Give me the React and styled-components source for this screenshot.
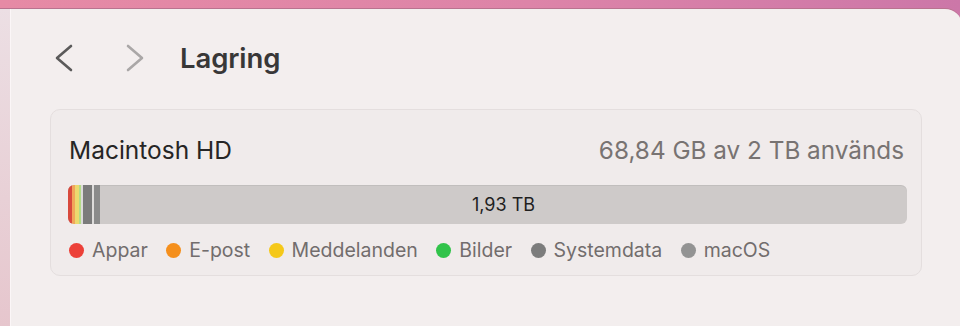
import React from "react";
import styled, { createGlobalStyle } from "styled-components";

const GlobalStyle = createGlobalStyle`
  html, body {
    margin: 0;
    padding: 0;
    width: 960px;
    height: 326px;
    overflow: hidden;
    font-family: Inter, "Noto Sans", "Liberation Sans", sans-serif;
  }
`;

const Desktop = styled.div`
  width: 960px;
  height: 326px;
  background: linear-gradient(90deg, #e68aa5 0%, #dd84a8 55%, #cc77a8 100%);
  display: flex;
  flex-direction: column;
  overflow: hidden;
`;

const Window = styled.div`
  flex: 1;
  margin-top: 8px;
  margin-right: -2px;
  display: flex;
  border-top: 1px solid #b9738f;
  border-top-right-radius: 17px;
  overflow: hidden;
`;

const Sidebar = styled.div`
  width: 10px;
  background: linear-gradient(180deg, #ecdfe4 0%, #e8d0d6 60%, #e6c6cd 100%);
  border-right: 1px solid #fbf6f7;
  box-shadow: 1px 0 0 #d3c9cc;
`;

const Content = styled.div`
  flex: 1;
  background: #f3eeee;
  padding: 31px 38px 0 39px;
`;

const Header = styled.div`
  display: flex;
  align-items: center;
  height: 36px;
`;

const NavButton = styled.button`
  width: 20px;
  height: 28px;
  padding: 0;
  margin: 0 ${(p) => p.$gap || 0}px 0 ${(p) => p.$offset || 0}px;
  border: none;
  background: none;
  display: flex;
  align-items: center;
  justify-content: center;
  color: ${(p) => (p.disabled ? "#aaa7a7" : "#5b5a5a")};
`;

const Title = styled.h1`
  margin: 0;
  font-size: 27.5px;
  font-weight: 600;
  color: #383737;
  letter-spacing: -0.1px;
  line-height: 36px;
`;

const Card = styled.section`
  margin-top: 33px;
  width: 872px;
  box-sizing: border-box;
  border: 1px solid #e4dede;
  border-radius: 10px;
  background: #f0ebeb;
  padding: 24px 14px 9px 17px;
`;

const CardHead = styled.div`
  display: flex;
  justify-content: space-between;
  align-items: center;
  line-height: 32px;
  padding-left: 1px;
`;

const DiskName = styled.span`
  font-size: 24.5px;
  color: #262525;
`;

const Usage = styled.span`
  font-size: 24.3px;
  color: #787372;
  padding-right: 3px;
`;

const Bar = styled.div`
  margin-top: 19px;
  height: 39px;
  border-radius: 6px;
  background: #cecac9;
  box-shadow: inset 0 1px 0 rgba(0, 0, 0, 0.06);
  display: flex;
  overflow: hidden;
`;

const Segment = styled.div`
  width: ${(p) => p.$w}px;
  background: ${(p) => p.$color};
  flex-shrink: 0;
`;

const FreeSpace = styled.div`
  flex: 1;
  display: flex;
  align-items: center;
  justify-content: center;
  font-size: 18px;
  color: #1f1f1f;
`;

const Legend = styled.ul`
  list-style: none;
  margin: 10px 0 0 0;
  padding: 0 0 0 1px;
  display: flex;
  gap: 18.4px;
  line-height: 32px;
`;

const LegendItem = styled.li`
  display: flex;
  align-items: center;
  gap: 8px;
  font-size: 19.5px;
  color: #726d6d;
`;

const Dot = styled.span`
  width: 15px;
  height: 15px;
  border-radius: 50%;
  background: ${(p) => p.$color};
`;

const Chevron = ({ dir }) => (
  <svg width="18" height="28" viewBox="0 0 18 28">
    <polyline
      points={dir === "left" ? "16,2 2,14 16,26" : "2,2 16,14 2,26"}
      fill="none"
      stroke="currentColor"
      strokeWidth="2.6"
      strokeLinecap="round"
      strokeLinejoin="round"
    />
  </svg>
);

const segments = [
  { w: 4, color: "#d8493c" },
  { w: 3, color: "#f1a55a" },
  { w: 4, color: "#ecd96e" },
  { w: 2, color: "#b3dc86" },
  { w: 2, color: "#dcdad9" },
  { w: 9, color: "#7b7b7b" },
  { w: 2, color: "#dedcdb" },
  { w: 6, color: "#8b8b8b" },
];

const legend = [
  { label: "Appar", color: "#ec4038" },
  { label: "E-post", color: "#f58f1c" },
  { label: "Meddelanden", color: "#f5c819" },
  { label: "Bilder", color: "#31c34a" },
  { label: "Systemdata", color: "#7c7c7c" },
  { label: "macOS", color: "#939393" },
];

const App = () => {
  return (
    <>
      <GlobalStyle />
      <Desktop>
        <Window>
          <Sidebar />
          <Content>
            <Header>
              <NavButton $offset={4} $gap={51}>
                <Chevron dir="left" />
              </NavButton>
              <NavButton disabled $gap={35}>
                <Chevron dir="right" />
              </NavButton>
              <Title>Lagring</Title>
            </Header>
            <Card>
              <CardHead>
                <DiskName>Macintosh HD</DiskName>
                <Usage>68,84 GB av 2 TB används</Usage>
              </CardHead>
              <Bar>
                {segments.map((s, i) => (
                  <Segment key={i} $w={s.w} $color={s.color} />
                ))}
                <FreeSpace>1,93 TB</FreeSpace>
              </Bar>
              <Legend>
                {legend.map((l) => (
                  <LegendItem key={l.label}>
                    <Dot $color={l.color} />
                    {l.label}
                  </LegendItem>
                ))}
              </Legend>
            </Card>
          </Content>
        </Window>
      </Desktop>
    </>
  );
};

export default App;
